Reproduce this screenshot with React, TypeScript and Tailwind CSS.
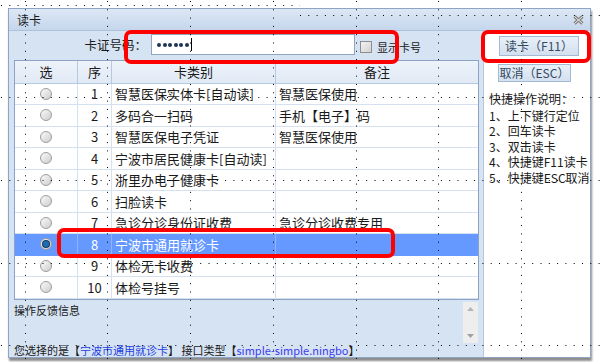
import React from "react";

interface CardRow {
  no: number;
  name: string;
  note: string;
}

const rows: CardRow[] = [
  { no: 1, name: "智慧医保实体卡[自动读]", note: "智慧医保使用" },
  { no: 2, name: "多码合一扫码", note: "手机【电子】码" },
  { no: 3, name: "智慧医保电子凭证", note: "智慧医保使用" },
  { no: 4, name: "宁波市居民健康卡[自动读]", note: "" },
  { no: 5, name: "浙里办电子健康卡", note: "" },
  { no: 6, name: "扫脸读卡", note: "" },
  { no: 7, name: "急诊分诊身份证收费", note: "急诊分诊收费专用" },
  { no: 8, name: "宁波市通用就诊卡", note: "" },
  { no: 9, name: "体检无卡收费", note: "" },
  { no: 10, name: "体检号挂号", note: "" },
];

const tips = ["上下键行定位", "回车读卡", "双击读卡", "快捷键F11读卡", "快捷键ESC取消"];

const Radio: React.FC<{ checked: boolean }> = ({ checked }) => (
  <span className="flex items-center justify-center w-[12px] h-[12px] rounded-full border border-[#9d9d9d] bg-linear-to-br from-[#fbfbfb] to-[#cdcdcd]">
    {checked && (
      <span className="w-[6px] h-[6px] rounded-full bg-[#1f6db0] ring-1 ring-[#0b3d66]" />
    )}
  </span>
);

// design-time dotted grid painted over the form
const DotGrid: React.FC = () => {
  const xs = [25, 107, 190, 273, 356, 438, 521];
  const ys = [97, 180, 263, 345];
  return (
    <svg className="absolute inset-0 pointer-events-none" width="600" height="362">
      {xs.map((x) => (
        <line key={"v" + x} x1={x + 0.5} y1={1} x2={x + 0.5} y2={362} stroke="#000" strokeDasharray="1 7.3" />
      ))}
      {ys.map((y) => (
        <line key={"h" + y} x1={1} y1={y + 0.5} x2={600} y2={y + 0.5} stroke="#000" strokeDasharray="1 7.3" />
      ))}
      <line x1={1} y1={5.5} x2={300} y2={5.5} stroke="#000" strokeDasharray="1 7.3" />
      <line x1={300} y1={15.5} x2={600} y2={15.5} stroke="#000" strokeDasharray="1 7.3" />
    </svg>
  );
};

const App: React.FC = () => {
  return (
    <div className="relative w-[600px] h-[362px] bg-white overflow-hidden pl-[8px] pt-[8px] font-['Noto_Sans_CJK_SC',sans-serif] text-[#1a1a1a]">
      {/* Window */}
      <div className="flex flex-col w-[583px] h-[350px] border border-[#8fa4c2] shadow-[1px_3px_2px_#8c8c8c]">
        {/* Title bar */}
        <div className="flex items-center justify-between h-[22px] px-[8px] bg-linear-to-b from-[#dde8f6] to-[#c5d6ec] border-b border-[#aec2dc]">
          <span className="text-[12px] leading-none">读卡</span>
          <svg width="11" height="10" viewBox="0 0 11 10" className="mr-[-2px]">
            <path d="M1.5 1.5 L9.5 8.5 M9.5 1.5 L1.5 8.5" stroke="#7d7d7d" strokeWidth="3" />
            <path d="M1.5 1.5 L9.5 8.5 M9.5 1.5 L1.5 8.5" stroke="#f4f4f4" strokeWidth="1" />
          </svg>
        </div>

        {/* Body */}
        <div className="flex flex-1 min-h-0">
          {/* Left side */}
          <div className="flex flex-col w-[474px] bg-[#d6e3f2]">
            <div className="flex items-start h-[29px] pt-[3px]">
              <span className="w-[142px] pr-[4px] text-right text-[12.5px] leading-[21px]">卡证号码：</span>
              <div className="flex items-center gap-[1.5px] w-[204px] h-[21px] bg-white border border-[#8ea6c4] pl-[5px]">
                {[0, 1, 2, 3, 4, 5].map((i) => (
                  <span key={i} className="w-[4px] h-[4px] rounded-full bg-[#1e3456]" />
                ))}
                <span className="ml-[1px] w-px h-[13px] bg-black" />
              </div>
              <span className="ml-[5px] mt-[7px] w-[12px] h-[12px] border border-[#8e8e8e] bg-linear-to-br from-[#f3f3f3] to-[#d2d2d2]" />
              <span className="ml-[5px] text-[11px] leading-[21px] mt-[3px]">显示卡号</span>
            </div>

            {/* Table */}
            <div className="ml-[5px] w-[465px] h-[240px] bg-white border border-[#8aa3c6] flex flex-col">
              <div className="flex h-[23px] bg-linear-to-b from-[#eef3fa] to-[#e0e9f5] border-b border-[#b6c9e1] text-[13px]">
                <div className="w-[63px] flex items-center justify-center border-r border-[#b6c9e1]">选</div>
                <div className="w-[34px] flex items-center justify-center border-r border-[#b6c9e1]">序</div>
                <div className="w-[164px] flex items-center justify-center border-r border-[#b6c9e1]">卡类别</div>
                <div className="flex-1 flex items-center justify-center">备注</div>
              </div>
              {rows.map((row) => {
                const sel = row.no === 8;
                return (
                  <div
                    key={row.no}
                    className={`flex h-[21.5px] text-[13px] border-b ${
                      sel ? "bg-[#6699ff] text-white border-[#6699ff]" : "border-[#d5e1f0]"
                    }`}
                  >
                    <div className={`w-[63px] flex items-center justify-center border-r ${sel ? "border-[#8fb3ff]" : "border-[#d5e1f0]"}`}>
                      <Radio checked={sel} />
                    </div>
                    <div className={`w-[34px] flex items-center justify-center border-r ${sel ? "border-[#8fb3ff]" : "border-[#d5e1f0]"}`}>
                      {row.no}
                    </div>
                    <div className={`w-[164px] flex items-center pl-[3px] whitespace-nowrap border-r ${sel ? "border-[#8fb3ff]" : "border-[#d5e1f0]"}`}>
                      {row.name}
                    </div>
                    <div className="flex-1 flex items-center pl-[3px] whitespace-nowrap">{row.note}</div>
                  </div>
                );
              })}
            </div>

            {/* Feedback */}
            <div className="flex h-[44px]">
              <div className="flex-1 pl-[5px] pt-[2px] text-[11px] leading-[16px]">操作反馈信息</div>
              <div className="flex flex-col justify-between items-center w-[15px] h-[41px] mt-[2px] mr-[5px] py-[5px] bg-[#eeeeee]">
                <svg width="7" height="4" viewBox="0 0 7 4"><path d="M0 4 L3.5 0 L7 4 Z" fill="#b5b5b5" /></svg>
                <svg width="7" height="4" viewBox="0 0 7 4"><path d="M0 0 L3.5 4 L7 0 Z" fill="#a0a0a0" /></svg>
              </div>
            </div>

            <div className="pl-[5px] text-[11px] leading-[14px] whitespace-nowrap">
              您选择的是【<span className="text-[#1f3fe0]">宁波市通用就诊卡</span>】 接口类型【
              <span className="text-[#3b3bf0]">simple-simple.ningbo</span>】
            </div>
          </div>

          {/* Right side */}
          <div className="flex flex-col flex-1 bg-white border-l border-[#b5c8df]">
            <button className="ml-[15px] mt-[5px] w-[80px] h-[20px] border border-[#a4b9d4] bg-linear-to-b from-[#e8f0f9] to-[#d3e0ef] text-[12px] text-[#34495e]">
              读卡（F11）
            </button>
            <button className="ml-[14px] mt-[8px] w-[73px] h-[18px] border border-[#a4b9d4] bg-linear-to-b from-[#e8f0f9] to-[#d3e0ef] text-[12px] text-[#34495e] leading-none">
              取消（ESC）
            </button>
            <div className="pl-[5px] mt-[9px] text-[12px] leading-[15.5px] whitespace-nowrap">
              <div className="mb-[1px]">快捷操作说明：</div>
              {tips.map((t, i) => (
                <div key={t}>
                  {i + 1}、{t}
                </div>
              ))}
            </div>
          </div>
        </div>
      </div>

      {/* Red annotation boxes */}
      <div className="absolute left-[124px] top-[30px] w-[275px] h-[34px] border-4 border-[#ff0000] rounded-[7px] pointer-events-none" />
      <div className="absolute left-[481px] top-[30px] w-[110px] h-[33px] border-4 border-[#ff0000] rounded-[7px] pointer-events-none" />
      <div className="absolute left-[57px] top-[228px] w-[338px] h-[30px] border-4 border-[#ff0000] rounded-[7px] pointer-events-none" />

      <DotGrid />
    </div>
  );
};

export default App;
